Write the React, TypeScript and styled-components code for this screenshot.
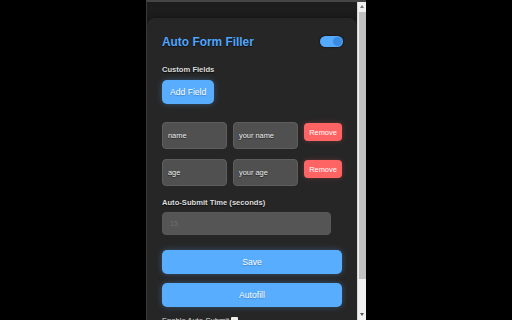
import React from "react";
import styled, { createGlobalStyle } from "styled-components";

const GlobalStyle = createGlobalStyle`
  html, body {
    margin: 0;
    padding: 0;
    background: #000;
    overflow: hidden;
  }
  * { box-sizing: border-box; }
`;

const Stage = styled.div`
  width: 512px;
  height: 320px;
  display: flex;
  justify-content: center;
  background: #000;
  font-family: "Liberation Sans", Arial, sans-serif;
`;

const Popup = styled.div`
  width: 220px;
  height: 320px;
  display: flex;
  border-top: 2px solid #454545;
  border-left: 1px solid #3a3a3a;
  background: #1d1d1d;
  overflow: hidden;
`;

const Content = styled.div`
  flex: 1;
  padding-top: 16px;
  overflow: hidden;
`;

const Card = styled.div`
  background: #262626;
  border-radius: 8px 8px 0 0;
  padding: 15px 14px 0 15px;
  box-shadow: 0 0 6px rgba(0, 0, 0, 0.4);
`;

const Header = styled.div`
  display: flex;
  align-items: center;
  justify-content: space-between;
  height: 17px;
`;

const Title = styled.h1`
  margin: 0;
  font-size: 11.9px;
  font-weight: 700;
  color: #4fa6ff;
  text-shadow: 0 1px 1px rgba(0, 0, 0, 0.6);
`;

const Toggle = styled.div`
  width: 23px;
  height: 11px;
  border-radius: 6px;
  background: #55aaff;
  box-shadow: 0 0 2px rgba(0, 0, 0, 0.9);
  display: flex;
  justify-content: flex-end;
  align-items: center;
  padding: 1px;
`;

const Knob = styled.div`
  width: 9px;
  height: 9px;
  border-radius: 50%;
  background: #3b8be0;
`;

const Label = styled.div<{ $top: number }>`
  margin-top: ${(p) => p.$top}px;
  font-size: 7.6px;
  font-weight: 700;
  color: #dcdcdc;
  text-shadow: 0 1px 1px rgba(0, 0, 0, 0.7);
  line-height: 9px;
`;

const Button = styled.button<{ $full?: boolean; $top?: number }>`
  display: block;
  border: none;
  margin-top: ${(p) => p.$top ?? 0}px;
  width: ${(p) => (p.$full ? "180px" : "auto")};
  height: 24px;
  padding: 0 8px;
  border-radius: 5px;
  background: #58adff;
  color: #fff;
  font-family: inherit;
  font-size: 8.6px;
  text-shadow: 0 1px 1px rgba(0, 0, 0, 0.25);
  box-shadow: 0 0 6px rgba(88, 173, 255, 0.35);
`;

const FieldList = styled.div`
  margin-top: 18px;
  display: flex;
  flex-direction: column;
  gap: 10px;
`;

const FieldRow = styled.div`
  display: flex;
  align-items: flex-start;
  gap: 6px;
`;

const FieldInput = styled.div<{ $width: number }>`
  width: ${(p) => p.$width}px;
  height: 27px;
  border: 1px solid #5e5e5e;
  border-radius: 4px;
  background: #505050;
  color: #ececec;
  font-size: 7.4px;
  padding-left: 5px;
  display: flex;
  align-items: center;
  text-shadow: 0 1px 1px rgba(0, 0, 0, 0.6);
`;

const TimeInput = styled(FieldInput)`
  margin-top: 5px;
  height: 23px;
  border-color: #585858;
  background: #555;
  color: #6e6e6e;
  text-shadow: none;
  padding-left: 7px;
`;

const RemoveButton = styled.button`
  margin-top: 1px;
  border: none;
  width: 38px;
  height: 18px;
  border-radius: 4px;
  background: #ff6464;
  color: #fff;
  font-family: inherit;
  font-size: 7.4px;
  padding: 0;
  box-shadow: 0 0 5px rgba(255, 90, 90, 0.3);
`;

const CheckRow = styled.div`
  margin-top: 8px;
  display: flex;
  align-items: center;
  gap: 2px;
  font-size: 7.6px;
  color: #dcdcdc;
  height: 10px;
`;

const CheckBox = styled.div`
  width: 7px;
  height: 7px;
  background: #eee;
  border-radius: 1px;
`;

const Scrollbar = styled.div`
  width: 9px;
  background: #f1f1f1;
  display: flex;
  flex-direction: column;
  align-items: center;
  padding: 3px 0 4px;
  border-left: 1px solid #d8d8d8;
`;

const Arrow = styled.div<{ $down?: boolean }>`
  width: 0;
  height: 0;
  border-left: 2.5px solid transparent;
  border-right: 2.5px solid transparent;
  ${(p) =>
    p.$down
      ? "border-top: 3px solid #555;"
      : "border-bottom: 3px solid #777;"}
`;

const Thumb = styled.div`
  margin-top: 4px;
  width: 7px;
  height: 267px;
  background: #c1c1c1;
`;

const Spacer = styled.div`
  flex: 1;
`;

const fields = [
  { key: "name", value: "your name" },
  { key: "age", value: "your age" },
];

export default function App() {
  return (
    <>
      <GlobalStyle />
      <Stage>
        <Popup>
          <Content>
            <Card>
              <Header>
                <Title>Auto Form Filler</Title>
                <Toggle>
                  <Knob />
                </Toggle>
              </Header>
              <Label $top={15}>Custom Fields</Label>
              <Button $top={6}>Add Field</Button>
              <FieldList>
                {fields.map((f) => (
                  <FieldRow key={f.key}>
                    <FieldInput $width={65}>{f.key}</FieldInput>
                    <FieldInput $width={65}>{f.value}</FieldInput>
                    <RemoveButton>Remove</RemoveButton>
                  </FieldRow>
                ))}
              </FieldList>
              <Label $top={12}>Auto-Submit Time (seconds)</Label>
              <TimeInput $width={169}>15</TimeInput>
              <Button $full $top={15}>Save</Button>
              <Button $full $top={9}>Autofill</Button>
              <CheckRow>
                Enable Auto-Submit <CheckBox />
              </CheckRow>
            </Card>
          </Content>
          <Scrollbar>
            <Arrow />
            <Thumb />
            <Spacer />
            <Arrow $down />
          </Scrollbar>
        </Popup>
      </Stage>
    </>
  );
}
